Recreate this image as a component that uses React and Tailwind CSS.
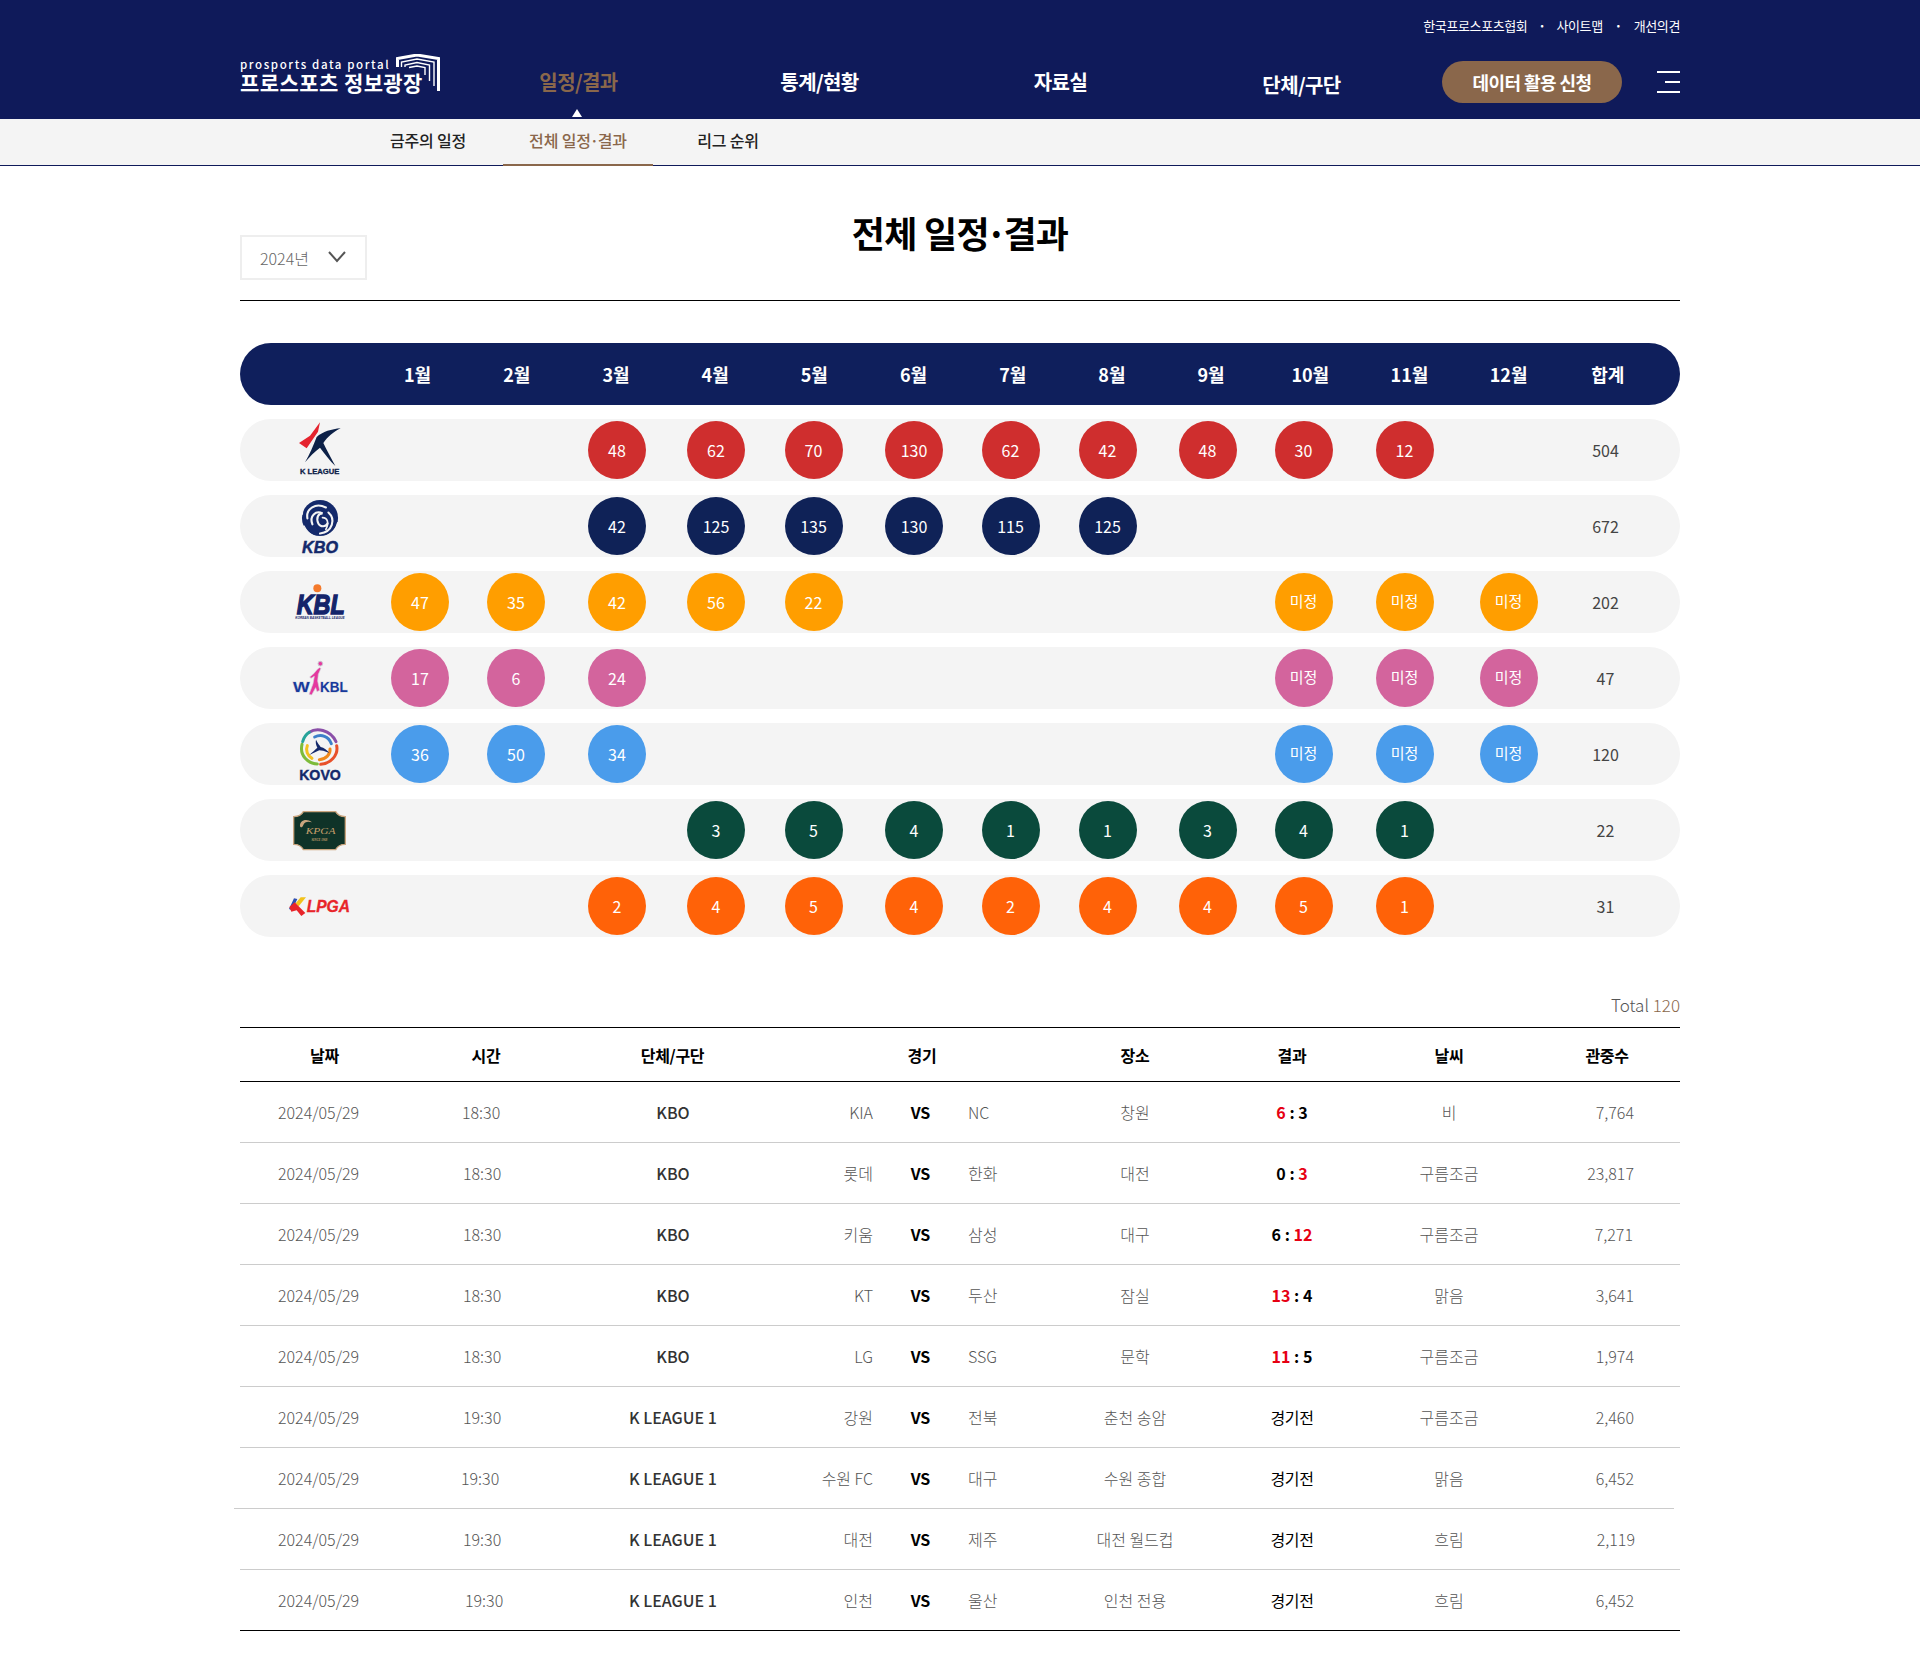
const MONTHS = ["1월","2월","3월","4월","5월","6월","7월","8월","9월","10월","11월","12월","합계"];
const SANS = "Liberation Sans, sans-serif";

function KLeagueLogo() {
  return (
    <svg viewBox="0 0 180 186" className="w-[60px] h-[62px]">
      <path d="M90 10 L84 38 L50 88 L27 72 L60 50 Z" fill="#e5232e" />
      <path d="M152 28 C125 30 98 38 80 54 C70 80 58 108 45 130 C58 114 74 98 90 86 C104 104 120 126 136 141 C124 118 110 94 100 72 C112 54 132 38 152 28 Z" fill="#0d2148" />
      <text x="89" y="165" textAnchor="middle" fontSize="20" fontWeight="700" fill="#0d2148" stroke="#0d2148" strokeWidth="0.8" fontFamily={SANS} textLength="118" lengthAdjust="spacingAndGlyphs">K LEAGUE</text>
    </svg>
  );
}

function KboLogo() {
  return (
    <svg viewBox="0 225 180 186" className="w-[60px] h-[62px]">
      <g transform="translate(90 294) scale(1.26) translate(-80 -285)">
        <circle cx="80" cy="285" r="43" fill="#14296b" />
        <g fill="none" stroke="#f4f4f4" strokeLinecap="round">
          <path d="M50 286 C46 262 70 248 94 260" strokeWidth="5" />
          <path d="M62 300 C54 280 70 266 86 274 C76 274 70 284 76 298 C82 308 94 306 98 298" strokeWidth="5" />
          <path d="M100 272 C118 288 110 318 80 322" strokeWidth="5" />
          <path d="M86 284 C98 284 102 296 94 312" strokeWidth="4" />
          <path d="M50 246 C42 254 38 264 38 276" strokeWidth="3" />
          <path d="M122 296 C118 312 108 322 96 328" strokeWidth="3" />
          <path d="M42 304 C48 316 56 324 66 328" strokeWidth="3" />
        </g>
      </g>
      <text x="90" y="400" textAnchor="middle" fontSize="50" fontWeight="700" fontStyle="italic" fill="#14296b" stroke="#14296b" strokeWidth="1.5" fontFamily={SANS} textLength="108" lengthAdjust="spacingAndGlyphs">KBO</text>
    </svg>
  );
}

function KblLogo() {
  return (
    <svg viewBox="0 -12 210 186" className="w-[70px] h-[62px]">
      <text x="107" y="116" textAnchor="middle" fontSize="84" fontWeight="700" fontStyle="italic" fill="#14246a" stroke="#14246a" strokeWidth="4" fontFamily={SANS} textLength="144" lengthAdjust="spacingAndGlyphs">KBL</text>
      <circle cx="97" cy="40" r="12" fill="#f47a2c" />
      <text x="105" y="132" textAnchor="middle" fontSize="10" fontWeight="700" fontStyle="italic" fill="#14246a" fontFamily={SANS} textLength="148" lengthAdjust="spacingAndGlyphs">KOREAN BASKETBALL LEAGUE</text>
    </svg>
  );
}

function WkblLogo() {
  return (
    <svg viewBox="0 216 210 186" className="w-[70px] h-[62px]">
      <text x="24" y="351" fontSize="46" fontWeight="700" fill="#173a9c" stroke="#d5d5dd" strokeWidth="3" paintOrder="stroke" fontFamily={SANS} textLength="50" lengthAdjust="spacingAndGlyphs">W</text>
      <text x="105" y="351" fontSize="46" fontWeight="700" fill="#173a9c" stroke="#d5d5dd" strokeWidth="3" paintOrder="stroke" fontFamily={SANS} textLength="83" lengthAdjust="spacingAndGlyphs">KBL</text>
      <path d="M97 283 L86 296 L74 306 L78 310 L88 304 L84 326 L72 358 L80 360 L92 338 L96 350 L104 346 L98 318 L100 298 L108 280 L103 278 Z" fill="#e5399f" stroke="#d5d5dd" strokeWidth="2" />
      <circle cx="106" cy="266" r="7" fill="#e5399f" stroke="#c9c9d2" strokeWidth="3" />
    </svg>
  );
}

function KovoLogo() {
  return (
    <svg viewBox="0 -6 240 186" className="w-[80px] h-[62px]">
      <g fill="none" strokeWidth="9" strokeLinecap="round">
        <path d="M88 22 C108 8 150 12 168 50" stroke="#8a4fa8" />
        <path d="M104 36 C124 26 146 34 154 56" stroke="#3d7fc9" />
        <path d="M170 62 C176 92 150 116 122 118" stroke="#e8502a" />
        <path d="M150 72 C152 88 138 102 118 104" stroke="#f08a1c" />
        <path d="M112 117 C84 116 58 92 66 58" stroke="#7dbb3a" />
        <path d="M96 100 C82 92 76 76 82 62" stroke="#f3c021" />
        <path d="M68 50 C72 36 78 28 88 22" stroke="#27a39a" />
      </g>
      <path d="M108 44 C112 54 120 62 122 66 C132 68 142 76 148 84 C134 78 124 76 118 76 C110 80 98 86 88 90 C96 82 106 74 112 68 C108 60 106 52 108 44 Z" fill="#14296b" />
      <text x="120" y="166" textAnchor="middle" fontSize="42" fontWeight="700" fill="#14296b" stroke="#14296b" strokeWidth="1.2" fontFamily={SANS} textLength="125" lengthAdjust="spacingAndGlyphs">KOVO</text>
    </svg>
  );
}

function KpgaLogo() {
  return (
    <svg viewBox="0 222 240 186" className="w-[80px] h-[62px]">
      <path d="M70 260 L167 260 Q175 275 196 275 L196 358 Q175 358 167 374 L70 374 Q62 358 41 358 L41 275 Q62 275 70 260 Z" fill="#0f3328" stroke="#c9a47e" strokeWidth="4" />
      <path d="M60 304 C58 288 78 278 96 292 C84 288 74 290 70 300 C68 306 62 310 60 304 Z" fill="#c9a47e" />
      <text x="122" y="327" textAnchor="middle" fontSize="26" fontStyle="italic" fill="#c9a06c" fontFamily="Liberation Serif, serif" textLength="90" lengthAdjust="spacingAndGlyphs">KPGA</text>
      <text x="118" y="348" textAnchor="middle" fontSize="9" fontStyle="italic" fontWeight="700" fill="#c9a06c" fontFamily="Liberation Serif, serif">SINCE 1968</text>
    </svg>
  );
}

function KlpgaLogo() {
  return (
    <svg viewBox="0 450 240 186" className="w-[80px] h-[62px]">
      <path d="M42 520 L52 522 L36 556 L27 552 Z" fill="#2f4fb0" />
      <path d="M62 517 L78 517 L56 544 L46 536 Z" fill="#f2c21a" />
      <path d="M28 546 L44 532 L76 564 L64 573 L50 556 L34 560 Z" fill="#e8242a" />
      <text x="80" y="560" fontSize="50" fontWeight="700" fontStyle="italic" fill="#e8242a" stroke="#e8242a" strokeWidth="1" fontFamily={SANS} textLength="130" lengthAdjust="spacingAndGlyphs">LPGA</text>
    </svg>
  );
}

const D = "미정";
const LEAGUES = [
  { logo: <KLeagueLogo />, color: "bg-[#cf2e2e]", v: [, , 48, 62, 70, 130, 62, 42, 48, 30, 12, ,], total: 504 },
  { logo: <KboLogo />, color: "bg-[#0f2257]", v: [, , 42, 125, 135, 130, 115, 125, , , , ,], total: 672 },
  { logo: <KblLogo />, color: "bg-[#ff9e00]", v: [47, 35, 42, 56, 22, , , , , D, D, D], total: 202 },
  { logo: <WkblLogo />, color: "bg-[#d3649d]", v: [17, 6, 24, , , , , , , D, D, D], total: 47 },
  { logo: <KovoLogo />, color: "bg-[#4a9ceb]", v: [36, 50, 34, , , , , , , D, D, D], total: 120 },
  { logo: <KpgaLogo />, color: "bg-[#0a4a3c]", v: [, , , 3, 5, 4, 1, 1, 3, 4, 1, ,], total: 22 },
  { logo: <KlpgaLogo />, color: "bg-[#ff6208]", v: [, , 2, 4, 5, 4, 2, 4, 4, 5, 1, ,], total: 31 },
];

const GAMES = [
  { t: "18:30", off: "pl-[22px]", o: "KBO", a: "KIA", b: "NC", p: "창원", r: [6, 3, "a"], w: "비", n: "7,764", np: "pr-[46px]" },
  { t: "18:30", off: "pl-[23px]", o: "KBO", a: "롯데", b: "한화", p: "대전", r: [0, 3, "b"], w: "구름조금", n: "23,817", np: "pr-[46px]" },
  { t: "18:30", off: "pl-[23px]", o: "KBO", a: "키움", b: "삼성", p: "대구", r: [6, 12, "b"], w: "구름조금", n: "7,271", np: "pr-[47px]" },
  { t: "18:30", off: "pl-[23px]", o: "KBO", a: "KT", b: "두산", p: "잠실", r: [13, 4, "a"], w: "맑음", n: "3,641", np: "pr-[46px]" },
  { t: "18:30", off: "pl-[23px]", o: "KBO", a: "LG", b: "SSG", p: "문학", r: [11, 5, "a"], w: "구름조금", n: "1,974", np: "pr-[46px]" },
  { t: "19:30", off: "pl-[23px]", o: "K LEAGUE 1", a: "강원", b: "전북", p: "춘천 송암", s: "경기전", w: "구름조금", n: "2,460", np: "pr-[46px]" },
  { t: "19:30", off: "pl-[21px]", o: "K LEAGUE 1", a: "수원 FC", b: "대구", p: "수원 종합", s: "경기전", w: "맑음", n: "6,452", np: "pr-[46px]", shift: true },
  { t: "19:30", off: "pl-[23px]", o: "K LEAGUE 1", a: "대전", b: "제주", p: "대전 월드컵", s: "경기전", w: "흐림", n: "2,119", np: "pr-[45px]" },
  { t: "19:30", off: "pl-[25px]", o: "K LEAGUE 1", a: "인천", b: "울산", p: "인천 전용", s: "경기전", w: "흐림", n: "6,452", np: "pr-[46px]", end: true },
];

const HEAD_MONTHS = "grid grid-cols-[128px_repeat(13,99.2px)_1fr]";
const RANK_COLS = "grid grid-cols-[132px_96px_96px_106px_92px_103px_98px_95px_99px_101px_91px_111px_97px_97px_26px]";
const TABLE_COLS = "grid grid-cols-[200px_100px_266px_67px_95px_94px_146px_168px_146px_158px]";
const HEAD_COLS = "grid grid-cols-[169px_154px_219px_280px_146px_168px_146px_158px]";

function Score({ r, s }) {
  if (s) return <span className="font-normal text-black tracking-[-0.02em]">{s}</span>;
  const [x, y, win] = r;
  return (
    <span className="font-bold text-black">
      <span className={win === "a" ? "text-[#e60012]" : ""}>{x}</span>
      <span> : </span>
      <span className={win === "b" ? "text-[#e60012]" : ""}>{y}</span>
    </span>
  );
}

export default function App() {
  return (
    <div className="font-['Noto_Sans_CJK_KR','Noto_Sans',sans-serif] bg-white min-h-[1671px] text-[#333]">
      <header className="bg-[#0f1a5a] h-[119px]">
        <div className="w-[1440px] mx-auto">
          <div className="h-[61px] pt-[17px] flex justify-end items-start text-[13px] leading-[18px] text-white tracking-[-0.03em]">
            <span>한국프로스포츠협회</span>
            <span className="w-[29px] text-center font-bold">·</span>
            <span>사이트맵</span>
            <span className="w-[31px] text-center font-bold">·</span>
            <span>개선의견</span>
          </div>
          <div className="flex items-start text-white">
            <div className="w-[218px] -mt-[7px] h-[40px] relative">
              <div className="text-[11.5px] leading-[14px] tracking-[0.14em] pt-[3px] font-medium whitespace-nowrap">prosports data portal</div>
              <div className="text-[21px] leading-[22px] font-bold tracking-[0.02em] whitespace-nowrap">프로스포츠 정보광장</div>
              <svg viewBox="0 0 44 37" className="absolute left-[156px] top-0 w-[44px] h-[37px]" fill="none" stroke="#fff">
                <path d="M1.5 13 V4.5 L21 1 L42.5 4.5 V37" strokeWidth="3" />
                <path d="M5.5 13 V8 L21 5 L38 8 V32" strokeWidth="1.4" />
                <path d="M9 13 V11 L21 8.5 L33.5 11 V27" strokeWidth="1.4" />
                <path d="M13 13.5 L21 12 L29 13.5 V21" strokeWidth="1.4" />
              </svg>
            </div>
            <nav className="flex text-[20px] font-bold h-[42px] items-center tracking-[-0.03em]">
              <a className="w-[241px] text-center text-[#8a674b] relative">일정/결과
                <span className="absolute left-[114px] top-[42px] w-0 h-0 border-l-[5px] border-r-[5px] border-b-[8px] border-l-transparent border-r-transparent border-b-white" />
              </a>
              <a className="w-[241px] text-center">통계/현황</a>
              <a className="w-[241px] text-center">자료실</a>
              <a className="w-[241px] text-center pt-[5px]">단체/구단</a>
            </nav>
            <button className="ml-[20px] w-[180px] h-[42px] rounded-full bg-[#8a674b] text-[18px] font-bold text-white tracking-[-0.03em]">데이터 활용 신청</button>
            <div className="ml-[35px] w-[23px] h-[22px] mt-[10px] flex flex-col justify-between items-end">
              <span className="block w-[23px] h-[2px] bg-white" />
              <span className="block w-[15px] h-[2px] bg-white" />
              <span className="block w-[23px] h-[2px] bg-white" />
            </div>
          </div>
        </div>
      </header>

      <div className="bg-[#f4f4f4] h-[47px] border-b border-[#0f1a5a]">
        <div className="w-[1440px] mx-auto flex pl-[113px] text-[16px] font-medium text-[#222] h-[46px] leading-[42px] tracking-[-0.01em]">
          <a className="w-[150px] text-center">금주의 일정</a>
          <a className="w-[150px] h-[47px] text-center text-[#8a674b] border-b-2 border-[#8a674b]">전체 일정<span className="-mx-[1px]">·</span>결과</a>
          <a className="w-[150px] text-center">리그 순위</a>
        </div>
      </div>

      <main className="w-[1440px] mx-auto">
        <div className="relative h-[135px] border-b border-black">
          <div className="absolute left-0 top-[69px] w-[127px] h-[45px] border-2 border-[#eeeeee] flex items-center pl-[18px] text-[16px] text-[#666] font-light">
            <span>2024년</span>
            <svg viewBox="0 0 18 12" className="ml-[19px] w-[18px] h-[12px] -mt-[2px]" fill="none" stroke="#555" strokeWidth="2"><path d="M1 1 L9 10 L17 1" /></svg>
          </div>
          <h1 className="pt-[41px] text-center text-[36px] leading-[50px] font-bold text-black tracking-[-0.02em]">전체 일정<span className="-mx-[3px]">·</span>결과</h1>
        </div>

        <div className={`${HEAD_MONTHS} mt-[42px] h-[62px] rounded-full bg-[#0f1f5c] items-center text-[18px] font-bold text-white text-center`}>
          <span />
          {MONTHS.map((m) => <span key={m}>{m}</span>)}
          <span />
        </div>

        <div className="mt-[14px] flex flex-col gap-[14px]">
          {LEAGUES.map((l) => (
            <div key={l.total} className={`${RANK_COLS} h-[62px] rounded-full bg-[#f4f4f4] items-center`}>
              <div className="pl-[28px] flex justify-center h-[62px]">{l.logo}</div>
              {Array.from({ length: 12 }, (_, i) => (
                <div key={i} className="flex justify-center">
                  {l.v[i] !== undefined && (
                    <span className={`${l.color} w-[58px] h-[58px] rounded-full flex items-center justify-center pb-[1px] text-white ${l.v[i] === D ? "text-[15px]" : "text-[16px]"}`}>{l.v[i]}</span>
                  )}
                </div>
              ))}
              <div className="text-center text-[16px] text-[#444] pb-[1px]">{l.total}</div>
              <span />
            </div>
          ))}
        </div>

        <div className="mt-[56px] h-[34px] text-right text-[17px] leading-[24px] font-light text-[#555]">Total <span className="text-[#8a674b]">120</span></div>

        <div className={`${HEAD_COLS} h-[55px] border-y border-black items-center text-[16px] font-bold text-black text-center tracking-[-0.02em]`}>
          <span>날짜</span><span>시간</span><span>단체/구단</span><span>경기</span><span>장소</span><span>결과</span><span>날씨</span><span className="pl-[12px]">관중수</span>
        </div>

        {GAMES.map((g, i) => (
          <div key={i} className={`${TABLE_COLS} h-[61px] items-center border-b ${g.end ? "border-black" : "border-[#cccccc]"} ${g.shift ? "w-[1440px] -ml-[6px] pl-[6px]" : ""} ${i > 0 ? "pb-[1px]" : ""} text-[16px] font-light text-[#555]`}>
            <span className="pl-[38px]">2024/05/29</span>
            <span className={g.off}>{g.t}</span>
            <span className="text-center font-medium text-[#333]">{g.o}</span>
            <span className="text-right whitespace-nowrap">{g.a}</span>
            <span className="text-center font-bold text-black">VS</span>
            <span>{g.b}</span>
            <span className="text-center">{g.p}</span>
            <span className="text-center"><Score r={g.r} s={g.s} /></span>
            <span className="text-center">{g.w}</span>
            <span className={`text-right ${g.np}`}>{g.n}</span>
          </div>
        ))}
      </main>
    </div>
  );
}
